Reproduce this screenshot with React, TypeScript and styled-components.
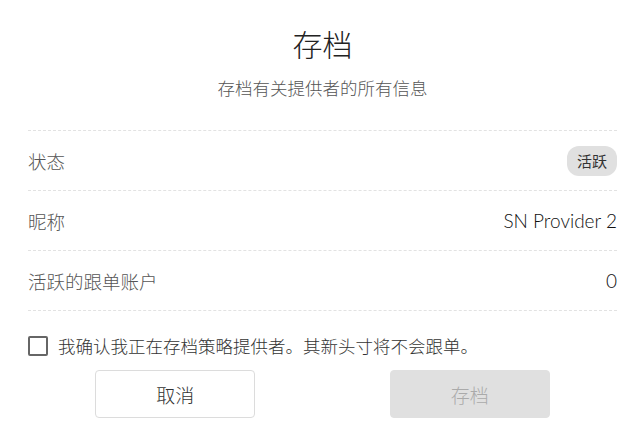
import React, { useState } from "react";
import styled, { createGlobalStyle } from "styled-components";

const GlobalStyle = createGlobalStyle`
  html, body {
    margin: 0;
    padding: 0;
    background: #fff;
  }
  body {
    font-family: "Lato", "Noto Sans CJK SC", sans-serif;
    color: #333;
  }
`;

const Dialog = styled.div`
  width: 642px;
  height: 447px;
  box-sizing: border-box;
  padding: 22px 25px 0 28px;
  display: flex;
  flex-direction: column;
`;

const Title = styled.h1`
  margin: 0;
  text-align: center;
  font-size: 30px;
  font-weight: 300;
  line-height: 44px;
  color: #222;
`;

const Subtitle = styled.p`
  margin: 11px 0 0;
  text-align: center;
  font-size: 17.5px;
  font-weight: 300;
  line-height: 24px;
  color: #555;
`;

const InfoList = styled.div`
  margin-top: 29px;
  border-top: 1px dashed #e2e2e2;
`;

const Row = styled.div`
  height: 59px;
  display: flex;
  align-items: center;
  justify-content: space-between;
  border-bottom: 1px dashed #e2e2e2;
  font-size: 18.5px;
  font-weight: 300;
`;

const Label = styled.span`
  color: #555;
`;

const Value = styled.span`
  color: #111;
  font-size: 19px;
  font-weight: 300;
`;

const Badge = styled.span`
  background: #e0e0e0;
  color: #333;
  font-size: 15px;
  font-weight: 400;
  line-height: 30px;
  padding: 0 10px;
  border-radius: 12px;
`;

const Confirm = styled.label`
  margin-top: 22px;
  display: flex;
  align-items: center;
  gap: 10px;
  font-size: 17.5px;
  font-weight: 300;
  color: #333;
  cursor: pointer;
`;

const Box = styled.span<{ $checked: boolean }>`
  width: 16px;
  height: 16px;
  flex: none;
  border: 2px solid #666;
  border-radius: 2px;
  background: ${(p) => (p.$checked ? "#666" : "#fff")};
`;

const Actions = styled.div`
  margin-top: 12px;
  display: grid;
  grid-template-columns: 1fr 1fr;
  justify-items: center;
`;

const Button = styled.button<{ $primary?: boolean }>`
  width: 160px;
  height: 48px;
  border-radius: 4px;
  font-family: inherit;
  font-size: 19px;
  font-weight: 300;
  border: 1px solid ${(p) => (p.$primary ? "#e0e0e0" : "#dcdcdc")};
  background: ${(p) => (p.$primary ? "#e0e0e0" : "#fff")};
  color: ${(p) => (p.$primary ? "#aaa" : "#333")};
  cursor: ${(p) => (p.$primary ? "default" : "pointer")};
`;

export default function App() {
  const [checked, setChecked] = useState(false);
  return (
    <>
      <GlobalStyle />
      <Dialog>
        <Title>存档</Title>
        <Subtitle>存档有关提供者的所有信息</Subtitle>
        <InfoList>
          <Row>
            <Label>状态</Label>
            <Badge>活跃</Badge>
          </Row>
          <Row>
            <Label>昵称</Label>
            <Value>SN Provider 2</Value>
          </Row>
          <Row>
            <Label>活跃的跟单账户</Label>
            <Value>0</Value>
          </Row>
        </InfoList>
        <Confirm onClick={() => setChecked(!checked)}>
          <Box $checked={checked} />
          我确认我正在存档策略提供者。其新头寸将不会跟单。
        </Confirm>
        <Actions>
          <Button>取消</Button>
          <Button $primary disabled={!checked}>存档</Button>
        </Actions>
      </Dialog>
    </>
  );
}
